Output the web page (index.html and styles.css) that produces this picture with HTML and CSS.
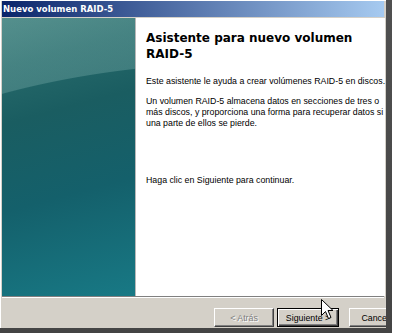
FILE: index.html
```html
<!DOCTYPE html>
<html lang="es">
<head>
<meta charset="utf-8">
<title>Nuevo volumen RAID-5</title>
<link rel="stylesheet" href="styles.css">
</head>
<body>
<div class="shot">
  <div class="win">
    <div class="titlebar"><span class="title">Nuevo volumen RAID-5</span></div>
    <div class="main">
      <div class="side"></div>
      <div class="content">
        <h1 class="heading">Asistente para nuevo volumen<br>RAID-5</h1>
        <p class="p1">Este asistente le ayuda a crear volúmenes RAID-5 en discos.</p>
        <p class="p2">Un volumen RAID-5 almacena datos en secciones de tres o<br>más discos, y proporciona una forma para recuperar datos si<br>una parte de ellos se pierde.</p>
        <p class="p3">Haga clic en Siguiente para continuar.</p>
      </div>
    </div>
    <div class="sep"></div>
    <div class="footer">
      <button class="btn disabled">&lt; Atrás</button>
      <button class="btn default">Siguiente &gt;</button>
      <button class="btn cancel">Cancelar</button>
    </div>
  </div>
  <svg class="cursor" width="13" height="21" viewBox="0 0 13 21">
    <path d="M0.5 0.5 L0.5 16.5 L4.5 12.5 L7.5 19.5 L10 18.5 L7 11.5 L12 11.5 Z" fill="#fff" stroke="#000" stroke-width="1" stroke-linejoin="miter"/>
  </svg>
</div>
</body>
</html>
```
FILE: styles.css
```css
html, body {
  margin: 0;
  padding: 0;
  background: #ffffff;
}

.shot {
  position: relative;
  width: 392px;
  height: 333px;
  background: linear-gradient(to bottom, #505050, #444444);
}

.win {
  box-sizing: border-box;
  width: 386px;
  height: 328px;
  padding: 1px 2px 0 2px;
  background: #d4d0c8;
  box-shadow: inset 1px 1px #ffffff;
  display: flex;
  flex-direction: column;
  overflow: hidden;
}

.titlebar {
  height: 16px;
  flex: none;
  background: linear-gradient(to right, #0a246a, #a6caf0);
  display: flex;
  align-items: center;
  padding-left: 1px;
}

.title {
  font-family: "DejaVu Sans", sans-serif;
  font-weight: bold;
  font-size: 8.5px;
  color: #ffffff;
  white-space: nowrap;
}

.main {
  margin-top: 1px;
  height: 278px;
  flex: none;
  display: flex;
}

.side {
  width: 133px;
  flex: none;
  border-right: 1px solid #b8b8b8;
  background:
    radial-gradient(ellipse 500px 238px at 248px 282px, rgba(255,255,255,0) 99.6%, rgba(160,205,200,0.26) 100%),
    linear-gradient(165deg, #3a7a78 0%, #26696a 16%, #1a5d61 34%, #14606b 62%, #187985 100%);
}

.content {
  flex: 1;
  background: #ffffff;
  padding: 12px 0 0 10px;
  font-family: "Liberation Sans", Arial, sans-serif;
  font-size: 8.8px;
  line-height: 11px;
  color: #000000;
  white-space: nowrap;
}

.heading {
  margin: 0;
  font-family: "DejaVu Sans", Verdana, sans-serif;
  font-weight: bold;
  font-size: 12px;
  line-height: 16px;
}

.content p {
  margin: 0;
}

.p1 {
  margin-top: 13.5px !important;
}

.p2 {
  margin-top: 9.5px !important;
}

.p3 {
  margin-top: 45.5px !important;
}

.sep {
  height: 0;
  flex: none;
  border-top: 1px solid #808080;
  border-bottom: 1px solid #ffffff;
}

.footer {
  flex: 1;
  display: flex;
  align-items: flex-start;
  padding: 10px 0 0 212px;
  gap: 3px;
}

.btn {
  box-sizing: border-box;
  height: 19px;
  width: 60px;
  flex: none;
  padding: 0;
  margin: 0;
  font-family: "Liberation Sans", Arial, sans-serif;
  font-size: 8.8px;
  color: #000000;
  background: #d4d0c8;
  border: 1px solid;
  border-color: #ffffff #404040 #404040 #ffffff;
  box-shadow: inset -1px -1px #808080;
}

.btn.disabled {
  color: #808080;
  text-shadow: 1px 1px #ffffff;
}

.btn.default {
  width: 62px;
  border-color: #000000;
  box-shadow: inset 1px 1px #ffffff, inset -1px -1px #404040, inset -2px -2px #808080;
}

.btn.cancel {
  margin-left: 7px;
}

.cursor {
  position: absolute;
  left: 321px;
  top: 299px;
}
```
